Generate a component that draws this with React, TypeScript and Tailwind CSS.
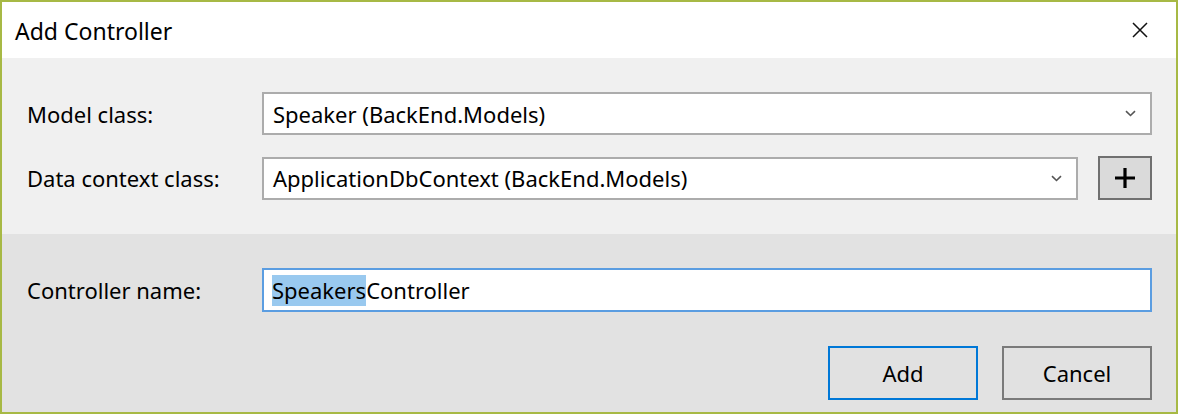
import React from 'react';

function Chevron() {
  return (
    <svg width="11" height="7" viewBox="0 0 11 7" className="shrink-0">
      <path d="M1 1.2 L5.5 5.5 L10 1.2" fill="none" stroke="#555" strokeWidth="1.6" />
    </svg>
  );
}

function Dropdown({ value, className }: { value: string; className?: string }) {
  return (
    <div
      className={`flex h-[43px] items-center justify-between border-2 border-[#acacac] bg-white pl-[9px] pr-[14px] ${className ?? ''}`}
    >
      <span>{value}</span>
      <Chevron />
    </div>
  );
}

export default function App() {
  return (
    <div
      className="flex h-[414px] w-[1178px] flex-col border-2 border-[#a7b945] text-[22px] leading-[30px] text-black"
      style={{ fontFamily: '"Noto Sans", "Segoe UI", sans-serif' }}
    >
      {/* title bar */}
      <div className="flex h-[56px] items-center justify-between bg-white pl-[13px] pr-[28px]">
        <span className="pt-[1px] text-[23px]">Add Controller</span>
        <svg width="16" height="16" viewBox="0 0 16 16">
          <path d="M1 1 L15 15 M15 1 L1 15" stroke="#111" strokeWidth="1.5" />
        </svg>
      </div>

      {/* model section */}
      <div className="flex h-[176px] flex-col gap-[21px] bg-[#f0f0f0] pl-[25px] pr-[24px] pt-[34px]">
        <div className="flex items-center">
          <span className="w-[235px]">Model class:</span>
          <Dropdown value="Speaker (BackEnd.Models)" className="flex-1" />
        </div>
        <div className="flex items-center">
          <span className="w-[235px]">Data context class:</span>
          <Dropdown value="ApplicationDbContext (BackEnd.Models)" className="flex-1" />
          <button className="ml-[20px] flex h-[44px] w-[54px] items-center justify-center border-2 border-[#707070] bg-[#dadada]">
            <svg width="20" height="20" viewBox="0 0 20 20">
              <path d="M10 0 V20 M0 10 H20" stroke="#000" strokeWidth="3.2" />
            </svg>
          </button>
        </div>
      </div>

      {/* name section */}
      <div className="flex flex-1 flex-col bg-[#e2e2e2] pl-[25px] pr-[24px] pt-[34px]">
        <div className="flex items-center">
          <span className="w-[235px]">Controller name:</span>
          <div className="flex h-[44px] flex-1 items-center border-2 border-[#5b9de1] bg-white pl-[8px]">
            <span className="bg-[#99c9ef] leading-[31px]">Speakers</span>
            <span>Controller</span>
          </div>
        </div>
        <div className="mt-[34px] flex justify-end gap-[24px]">
          <button className="h-[54px] w-[150px] border-2 border-[#0078d7] bg-[#e1e1e1]">Add</button>
          <button className="h-[54px] w-[150px] border-2 border-[#7a7a7a] bg-[#e1e1e1]">Cancel</button>
        </div>
      </div>
    </div>
  );
}
